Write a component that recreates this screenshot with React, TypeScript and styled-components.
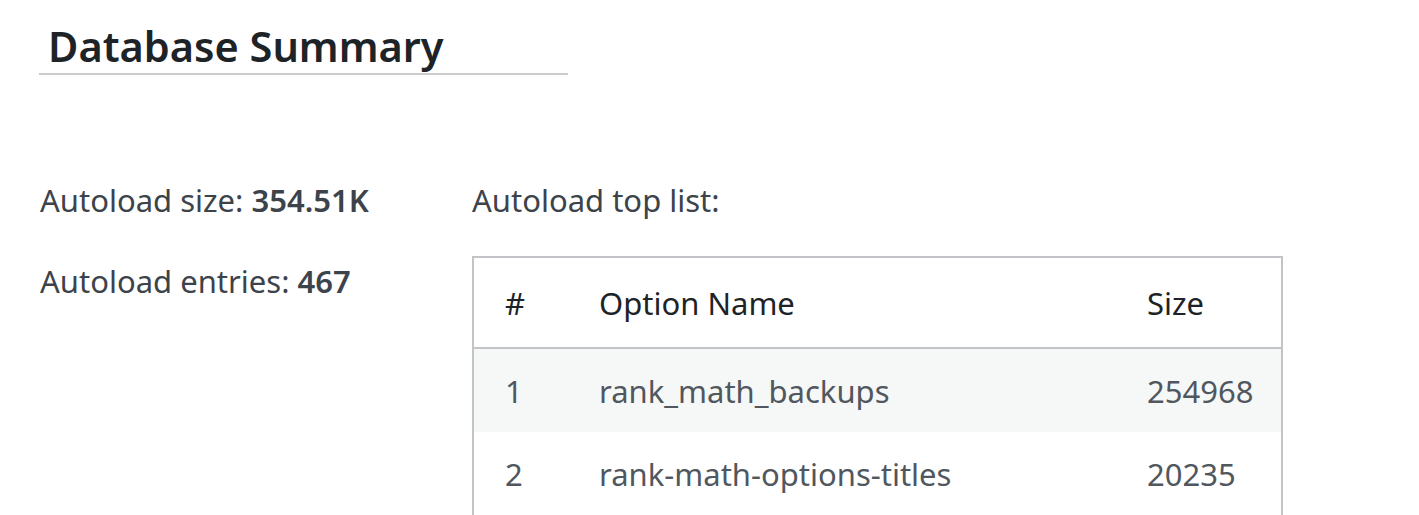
import React from 'react';
import styled, { createGlobalStyle } from 'styled-components';

const GlobalStyle = createGlobalStyle`
  body {
    margin: 0;
    background: #ffffff;
    font-family: "Noto Sans", "Open Sans", Arial, sans-serif;
  }
`;

const Page = styled.div`
  padding: 22px 0 0 39px;
`;

const Title = styled.h2`
  width: 520px;
  margin: 0;
  padding: 0 0 3px 9px;
  border-bottom: 2px solid #cccccc;
  color: #1d2327;
  font-size: 41.5px;
  font-weight: 600;
  line-height: 48px;
`;

const Columns = styled.div`
  display: flex;
  align-items: flex-start;
  margin-top: 103px;
  padding-left: 1px;
`;

const Stats = styled.div`
  width: 432px;
  flex-shrink: 0;
`;

const Stat = styled.p`
  margin: 0 0 37px;
  color: #3c434a;
  font-size: 31px;
  line-height: 44px;

  b {
    font-weight: 600;
  }
`;

const TopList = styled.div`
  flex: 1;
`;

const Label = styled.p`
  margin: 0 0 34px;
  color: #3c434a;
  font-size: 31px;
  line-height: 44px;
`;

const Table = styled.table`
  width: 811px;
  table-layout: fixed;
  border-collapse: separate;
  border-spacing: 0;
  border: 2px solid #c3c4c7;
  font-size: 31px;
`;

const Th = styled.th<{ $w?: number }>`
  box-sizing: border-box;
  ${p => (p.$w ? `width: ${p.$w}px;` : '')}
  height: 91px;
  padding: 0 0 0 31px;
  text-align: left;
  font-weight: 400;
  color: #1d2327;
  border-bottom: 2px solid #c3c4c7;
  vertical-align: middle;
`;

const Row = styled.tr<{ $alt?: boolean }>`
  background: ${p => (p.$alt ? '#f6f7f7' : '#ffffff')};
`;

const Td = styled.td`
  box-sizing: border-box;
  height: 83px;
  padding: 0 0 0 31px;
  color: #50575e;
  vertical-align: middle;
  white-space: nowrap;
`;

const rows = [
  { n: 1, name: 'rank_math_backups', size: 254968 },
  { n: 2, name: 'rank-math-options-titles', size: 20235 },
];

export default function App() {
  return (
    <Page>
      <GlobalStyle />
      <Title>Database Summary</Title>
      <Columns>
        <Stats>
          <Stat>
            Autoload size: <b>354.51K</b>
          </Stat>
          <Stat>
            Autoload entries: <b>467</b>
          </Stat>
        </Stats>
        <TopList>
          <Label>Autoload top list:</Label>
          <Table>
            <thead>
              <tr>
                <Th $w={94}>#</Th>
                <Th $w={548}>Option Name</Th>
                <Th>Size</Th>
              </tr>
            </thead>
            <tbody>
              {rows.map((r, i) => (
                <Row key={r.n} $alt={i % 2 === 0}>
                  <Td>{r.n}</Td>
                  <Td>{r.name}</Td>
                  <Td>{r.size}</Td>
                </Row>
              ))}
            </tbody>
          </Table>
        </TopList>
      </Columns>
    </Page>
  );
}
